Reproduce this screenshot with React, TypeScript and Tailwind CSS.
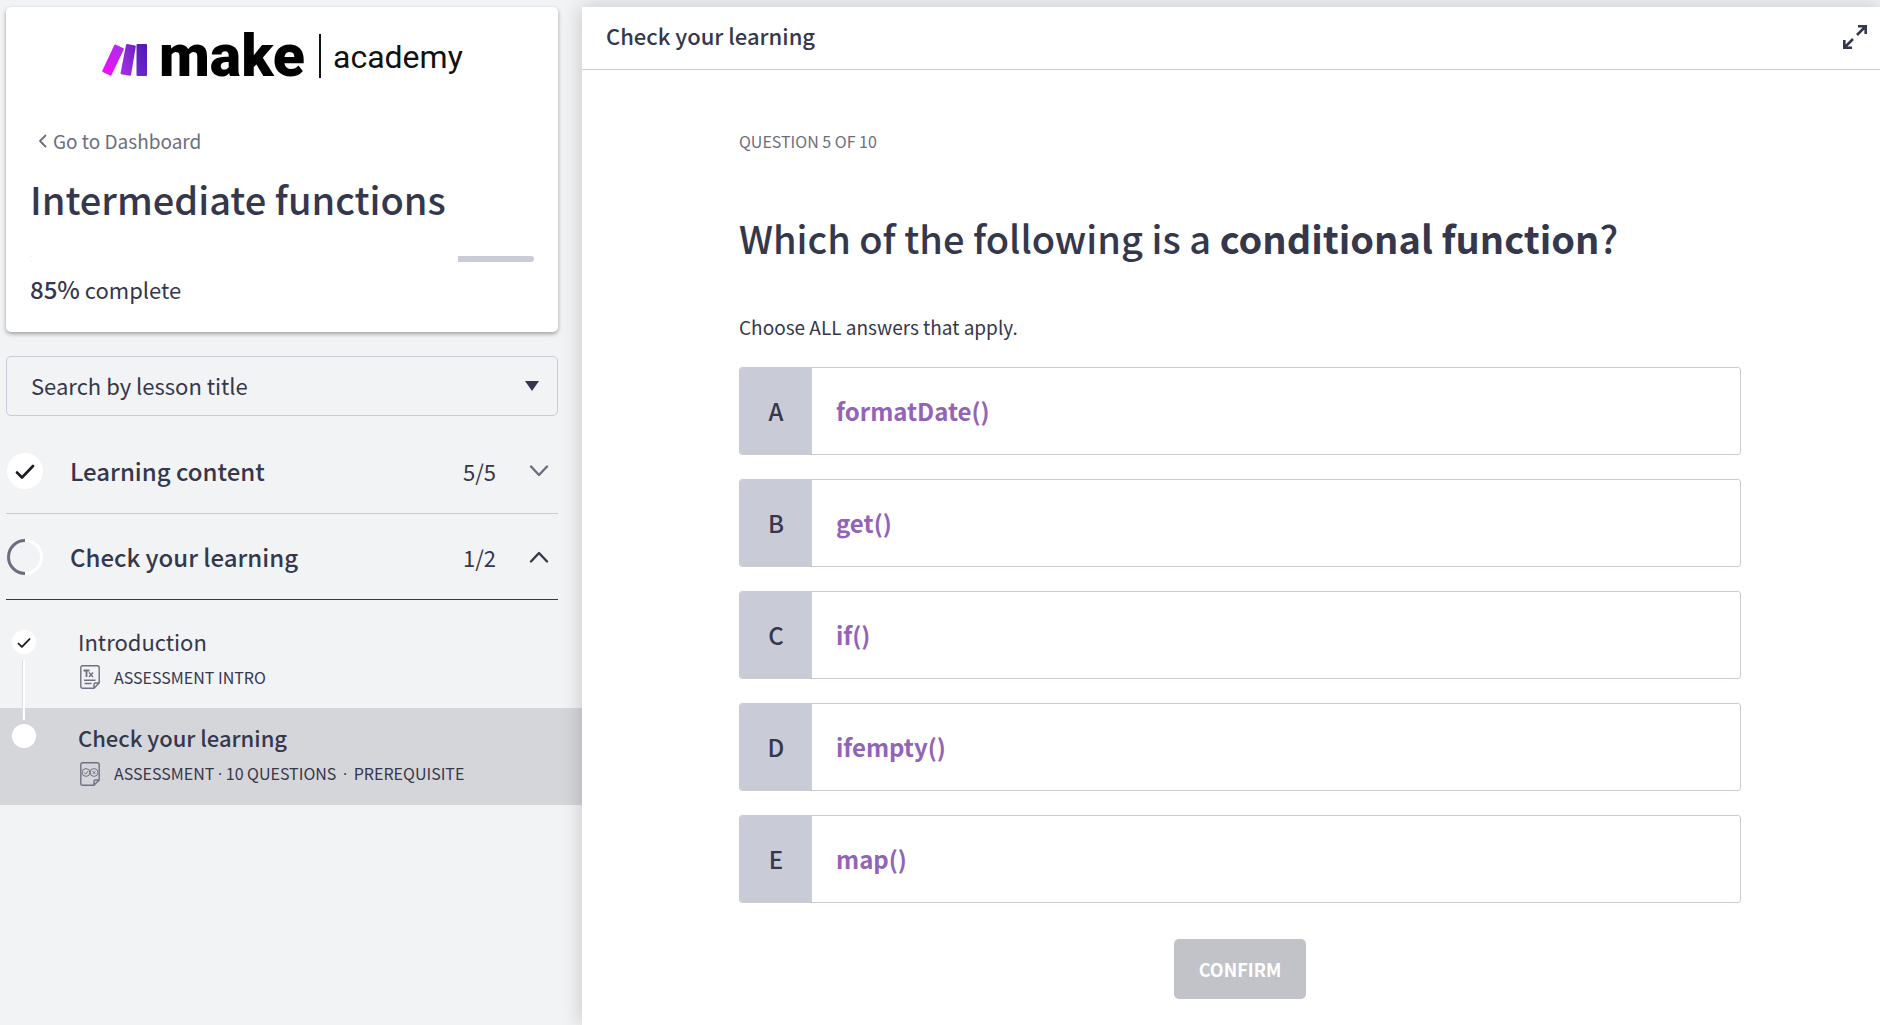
import type { ReactNode } from 'react';

const answers = [
  { letter: 'A', text: 'formatDate()' },
  { letter: 'B', text: 'get()' },
  { letter: 'C', text: 'if()' },
  { letter: 'D', text: 'ifempty()' },
  { letter: 'E', text: 'map()' },
];

function Logo() {
  return (
    <svg className="mx-auto block h-[72px] w-[364px]" viewBox="-2 -14 364 72" role="img" aria-label="make academy">
      <defs>
        <linearGradient id="bar1" x1="0" y1="1" x2="1" y2="0">
          <stop offset="0.1" stopColor="#f50cff" />
          <stop offset="1" stopColor="#a033e4" />
        </linearGradient>
        <linearGradient id="bar2" x1="0" y1="1" x2="1" y2="0">
          <stop offset="0" stopColor="#ad2fe8" />
          <stop offset="1" stopColor="#6a22c6" />
        </linearGradient>
        <linearGradient id="bar3" x1="0" y1="1" x2="0.6" y2="0">
          <stop offset="0" stopColor="#6f2bd0" />
          <stop offset="1" stopColor="#521bb6" />
        </linearGradient>
      </defs>
      <path d="M13.5 11.5 L21.5 15.2 Q22.2 15.7 21.8 16.5 L9.5 42 Q9 43 8 42.6 L0.8 39 Q0 38.5 0.4 37.6 L12.3 12 Q12.8 11.2 13.5 11.5Z" fill="url(#bar1)" />
      <path d="M25.2 11 L33 12.4 Q34 12.7 33.8 13.6 L29 42 Q28.8 43 27.8 42.8 L19.3 41.3 Q18.4 41 18.6 40.1 L24 11.9 Q24.3 10.9 25.2 11Z" fill="url(#bar2)" />
      <rect x="34.5" y="11" width="10.5" height="32" rx="1" fill="url(#bar3)" />
      <text x="57" y="43" fill="#000" className="font-['Roboto',sans-serif] text-[59px] font-black">make</text>
      <rect x="217" y="1" width="2" height="44" fill="#111" />
      <text x="231" y="35" fill="#111" className="font-['Roboto',sans-serif] text-[32px] font-normal">academy</text>
    </svg>
  );
}

function Check({ className }: { className: string }) {
  return (
    <svg className={className} viewBox="0 0 20 16" fill="none" stroke="#1b1c22" strokeWidth="2.6" strokeLinecap="round" strokeLinejoin="round" aria-hidden="true">
      <path d="M2 9.5l5 5L18 3" />
    </svg>
  );
}

function Chevron({ up }: { up?: boolean }) {
  return (
    <svg className="h-[12px] w-[20px]" viewBox="0 0 20 12" fill="none" stroke={up ? '#35374d' : '#6c6e80'} strokeWidth="2.4" strokeLinecap="round" strokeLinejoin="round" aria-hidden="true">
      <path d={up ? 'M2 10.5l8-8.5 8 8.5' : 'M2 1.5l8 8.5 8-8.5'} />
    </svg>
  );
}

function PageIcon({ children }: { children: ReactNode }) {
  return (
    <svg className="h-[24px] w-[20px] shrink-0" viewBox="0 0 20 24" fill="none" stroke="#6f7182" strokeWidth="1.4" strokeLinejoin="round" aria-hidden="true">
      <path d="M14 23.2H2.800Q0.800 23.200 0.800 21.200V2.800Q0.800 0.800 2.800 0.800H17.200Q19.200 0.800 19.200 2.800V18L14 23.200V19.500Q14 18 15.500 18H19.200" />
      {children}
    </svg>
  );
}

function Section({ title, count, open }: { title: string; count: string; open?: boolean }) {
  return (
    <button
      type="button"
      aria-expanded={!!open}
      className={`flex h-[86px] w-full items-center border-b text-left ${open ? 'border-[#35374d]' : 'border-[#c9cbd6]'}`}
    >
      {open ? (
        <svg className="ml-px size-[36px]" viewBox="0 0 36 36" fill="none" strokeWidth="3" aria-hidden="true">
          <path d="M18 1.5a16.5 16.5 0 0 1 0 33" stroke="#fff" />
          <path d="M18 1.5a16.5 16.5 0 0 0 0 33" stroke="#6c6e80" />
        </svg>
      ) : (
        <span className="ml-px flex size-[36px] items-center justify-center rounded-full bg-white">
          <Check className="h-[16px] w-[20px]" />
        </span>
      )}
      <span className="ml-[27px] flex-1 text-[24px] leading-[32px] font-medium">{title}</span>
      <span className="mr-[33px] text-[22px] leading-[28px]">{count}</span>
      <span className="mr-[9px]">
        <Chevron up={open} />
      </span>
    </button>
  );
}

function Dot({ className }: { className: string }) {
  return <span className={`font-['Open_Sans',sans-serif] ${className}`}>·</span>;
}

export default function App() {
  return (
    <div className="flex min-h-screen bg-[#f1f3f5] font-['Noto_Sans_CJK_SC',sans-serif] text-[#35374d]">
      <aside className="w-[582px] shrink-0 pt-[7px]">
        <div className="mr-6 ml-[6px]">
          <div className="rounded-[5px] bg-white px-6 pt-3 pb-7 shadow-[0_2px_4px_rgba(0,0,0,0.35)]">
            <Logo />
            <a href="#dashboard" className="mt-[36px] flex items-center pl-2 text-[19px] leading-[28px] text-[#6c6e80]">
              <svg className="h-[14px] w-[9px]" viewBox="0 0 9 14" fill="none" stroke="currentColor" strokeWidth="1.8" strokeLinecap="round" strokeLinejoin="round" aria-hidden="true">
                <path d="M7.500 1.500L2 7l5.500 5.500" />
              </svg>
              <span className="ml-[6px]">Go to Dashboard</span>
            </a>
            <h1 className="mt-5 text-[38px] leading-[48px] font-medium">Intermediate functions</h1>
            <div role="progressbar" aria-valuenow={85} aria-label="Course progress" className="mt-[33px] h-[6px] overflow-hidden rounded-full bg-[#c9cbd6]">
              <div className="h-full w-[85%] bg-white" />
            </div>
            <p className="mt-3 text-[22px] leading-[30px]">
              <span className="text-[24px] font-medium">85%</span> complete
            </p>
          </div>

          <div className="relative mt-6">
            <select aria-label="Search by lesson title" className="block h-[60px] w-full appearance-none rounded-[5px] border border-[#c9cbd6] bg-transparent pb-[2px] pl-6 text-[22px]">
              <option>Search by lesson title</option>
            </select>
            <svg className="pointer-events-none absolute top-[25px] right-[19px] h-[10px] w-[14px]" viewBox="0 0 14 10" aria-hidden="true">
              <path d="M0 0h14L7 10z" fill="#35374d" />
            </svg>
          </div>

          <div className="mt-3">
            <Section title="Learning content" count="5/5" />
            <Section title="Check your learning" count="1/2" open />
          </div>
        </div>

        <ul className="mt-3">
          <li className="relative flex pt-[15px] pb-[19px] pl-3">
            <span className="mt-[3px] flex size-[24px] items-center justify-center rounded-full bg-white">
              <Check className="h-[11px] w-[14px]" />
            </span>
            <span className="absolute top-[48px] left-[22px] z-10 h-[60px] w-[3px] border-l border-[#dcdde1] bg-white" />
            <a href="#introduction" className="ml-[42px] block">
              <span className="block text-[22px] leading-[28px]">Introduction</span>
              <span className="mt-[10px] flex items-center pl-[2px] text-[16px] leading-[24px]">
                <PageIcon>
                  <path d="M3.500 5.500H9.500M6.500 5.500V12" strokeWidth="1.8" />
                  <path d="M9 7.500L13 12M13 7.500L9 12" />
                  <path d="M4 15.200H15.500M4.500 18.500H11.500" />
                </PageIcon>
                <span className="ml-[14px]">ASSESSMENT INTRO</span>
              </span>
            </a>
          </li>
          <li className="flex bg-[#d5d6da] pt-[15px] pb-[19px] pl-3">
            <span className="mt-px size-[24px] rounded-full bg-white" />
            <a href="#check" aria-current="page" className="ml-[42px] block">
              <span className="block text-[22px] leading-[28px] font-medium">Check your learning</span>
              <span className="mt-[10px] flex items-center pl-[2px] text-[16px] leading-[24px]">
                <PageIcon>
                  <g strokeWidth="1">
                    <circle cx="6" cy="10.500" r="3.900" />
                    <circle cx="14" cy="10.500" r="3.900" />
                    <path d="M4.200 10.700l1.400 1.400 2.500-3M12.600 9.100l2.800 2.800M15.400 9.100l-2.800 2.800" />
                  </g>
                </PageIcon>
                <span className="ml-[14px]">
                  ASSESSMENT <Dot className="" /> 10 QUESTIONS <Dot className="mx-[3px]" /> PREREQUISITE
                </span>
              </span>
            </a>
          </li>
        </ul>
      </aside>

      <main className="relative z-20 mt-[7px] min-w-0 flex-1 bg-white shadow-[0_0_20px_rgba(0,0,0,0.2)]">
        <header className="flex h-[63px] items-center justify-between border-b border-[#c9cbd6] pr-3 pb-[6px] pl-6">
          <h2 className="text-[22px] leading-[28px] font-medium">Check your learning</h2>
          <button type="button" aria-label="Expand" className="mt-1 block">
            <svg className="size-[26px]" viewBox="0 0 26 26" fill="none" stroke="#35374d" strokeWidth="2.600" aria-hidden="true">
              <path d="M15 11L23.500 2.500M16 2.300H23.700V10M11 15L2.500 23.500M2.300 16V23.700H10" />
            </svg>
          </button>
        </header>

        <form className="pl-[18px]">
          <div className="mx-auto max-w-[1002px] pt-[59px]">
            <p className="text-[16px] leading-[24px] text-[#6c6e80]">QUESTION 5 OF 10</p>
            <h3 className="mt-[61px] text-[38px] leading-[48px] font-medium">
              Which of the following is a <strong className="font-bold">conditional function</strong>?
            </h3>
            <fieldset className="mt-[51px]">
              <legend className="text-[19px] leading-[28px]">Choose ALL answers that apply.</legend>
              <div className="mt-[26px] flex flex-col gap-6">
                {answers.map((a) => (
                  <label key={a.letter} className="relative flex h-[88px] cursor-pointer overflow-hidden rounded-[3px] border border-[#c9cbd6] text-[24px]">
                    <input type="checkbox" name="answer" value={a.letter} className="sr-only" />
                    <span className="flex w-[72px] items-center justify-center bg-[#c9cbd6] font-medium">{a.letter}</span>
                    <span className="flex items-center pl-6 font-bold text-[#9263b7]">{a.text}</span>
                  </label>
                ))}
              </div>
            </fieldset>
            <button type="button" disabled className="mx-auto mt-9 block rounded-[5px] bg-[#c2c3c9] px-[25px] py-4 text-[18px] leading-[28px] font-bold text-white">
              CONFIRM
            </button>
          </div>
        </form>
      </main>
    </div>
  );
}
